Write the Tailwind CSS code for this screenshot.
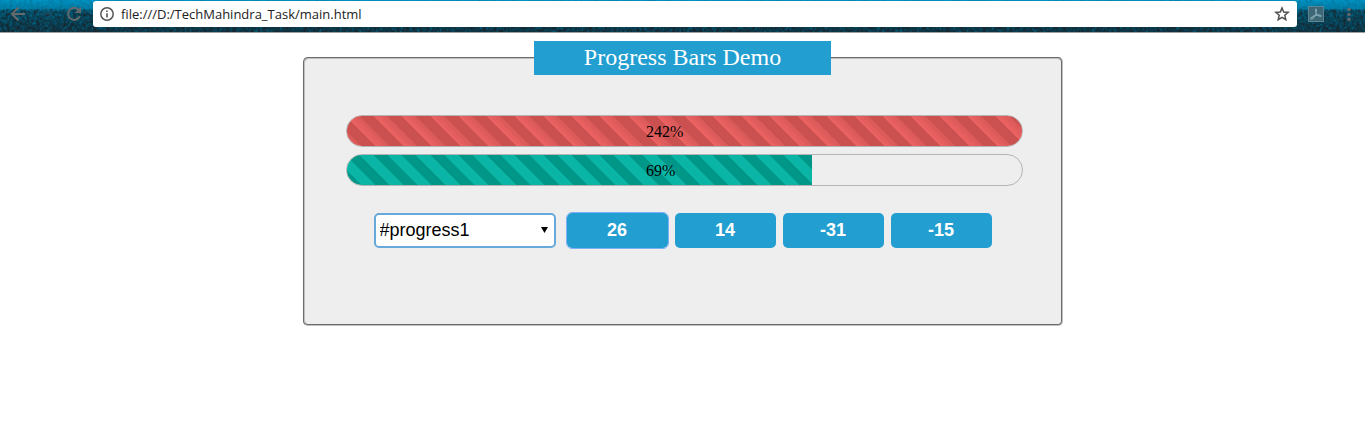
<!DOCTYPE html>
<html lang="en">
<head>
<meta charset="utf-8">
<title>Progress Bars Demo</title>
<script src="https://cdn.jsdelivr.net/npm/@tailwindcss/browser@4"></script>
</head>
<body class="min-h-screen bg-white font-['Liberation_Serif',serif] text-black">
<header class="relative flex h-[33px] items-start border-b border-[#a0a0a0] bg-[#063f54] pt-px">
  <svg class="absolute inset-0 h-full w-full" aria-hidden="true">
    <defs>
      <linearGradient id="glow" x1="0" y1="0" x2="0" y2="1">
        <stop offset="0" stop-color="#0095c6"/>
        <stop offset=".27" stop-color="#007da6"/>
        <stop offset=".36" stop-color="#02506a"/>
        <stop offset=".65" stop-color="#064358"/>
        <stop offset="1" stop-color="#0c3343"/>
      </linearGradient>
      <filter id="grain" x="0" y="0" width="100%" height="100%" color-interpolation-filters="sRGB">
        <feTurbulence type="fractalNoise" baseFrequency=".3" numOctaves="3" seed="4"/>
        <feColorMatrix values="0 0 0 0 .1  0 0 0 0 .12  0 0 0 0 .14  2 0 0 0 -.8"/>
      </filter>
      <filter id="sparkle" x="0" y="0" width="100%" height="100%" color-interpolation-filters="sRGB">
        <feTurbulence type="fractalNoise" baseFrequency=".4" numOctaves="2" seed="9"/>
        <feColorMatrix values="0 0 0 0 0  0 0 0 0 .5  0 0 0 0 .68  1.6 0 0 0 -.75"/>
      </filter>
    </defs>
    <rect width="100%" height="32" fill="url(#glow)"/>
    <rect width="100%" height="32" filter="url(#sparkle)"/>
    <rect y="9" width="100%" height="23" filter="url(#grain)"/>
    <rect width="100%" height="9" filter="url(#grain)" opacity=".2"/>
  </svg>
  <nav class="relative flex h-[26px] w-[93px] shrink-0 items-center text-[#63696c]" aria-label="History">
    <button type="button" aria-label="Back" class="ml-[10px] h-4 w-4">
      <svg viewBox="0 0 16 16" class="h-4 w-4" fill="none" stroke="currentColor" stroke-width="2"><path d="M15 8H2.500M8.500 1.500L2 8l6.500 6.500"/></svg>
    </button>
    <button type="button" aria-label="Forward" class="ml-[12px] h-4 w-4 text-[#24586b]/40">
      <svg viewBox="0 0 16 16" class="h-4 w-4" fill="none" stroke="currentColor" stroke-width="2"><path d="M2 8h11M8 2.500L13.500 8L8 13.500"/></svg>
    </button>
    <button type="button" aria-label="Reload" class="ml-[12px] h-4 w-4">
      <svg viewBox="0 0 16 16" class="h-4 w-4" fill="none" stroke="currentColor" stroke-width="2"><path d="M12.800 4A6 6 0 1 0 13.800 10"/><path d="M15 .8V7H8.800z" fill="currentColor" stroke="none"/></svg>
    </button>
  </nav>
  <form class="relative flex h-[26px] min-w-0 flex-1 items-center rounded-[3px] bg-white px-[7px]">
    <svg viewBox="0 0 14 14" class="h-[14px] w-[14px] shrink-0" fill="none" stroke="#555" aria-hidden="true"><circle cx="7" cy="7" r="6.200" stroke-width="1.500"/><path d="M7 6.200v4.200M7 3.400v1.600" stroke-width="1.600"/></svg>
    <input type="text" aria-label="Address" value="file:///D:/TechMahindra_Task/main.html" class="ml-[7px] min-w-0 flex-1 bg-transparent font-['Open_Sans',sans-serif] text-[13px] leading-[20px] text-[#222] outline-none">
    <button type="button" aria-label="Bookmark this page" class="h-4 w-4 shrink-0">
      <svg viewBox="0 0 16 16" class="h-4 w-4" fill="none" stroke="#505050" stroke-width="1.500"><path d="M8 2l1.700 4 4.500.4-3.400 2.900 1 4.300L8 11.300l-3.800 2.300 1-4.300L1.800 6.400 6.300 6z"/></svg>
    </button>
  </form>
  <div class="relative flex h-[26px] w-[68px] shrink-0 items-center">
    <button type="button" aria-label="PDF tools" class="ml-[11px] h-4 w-4 border border-[#5a8797] bg-[#3d6775]">
      <svg viewBox="0 0 14 14" class="h-[14px] w-[14px]" fill="none" stroke="#7ea3b0" stroke-width="1.100"><path d="M2 12c-1.300-1 2.500-3.200 5-3.600 2.400-.5 5.300-.4 5.200.6-.1 1.100-2.600.3-4.200-1.600C6.500 5.500 5.900 2 6.900 2c1.100 0 .8 3-.6 6C4.900 10.800 2.900 12.900 2 12z"/></svg>
    </button>
    <button type="button" aria-label="Menu" class="ml-[17px] h-4 w-4">
      <svg viewBox="0 0 16 16" class="h-4 w-4" fill="#63696c"><circle cx="8" cy="3.500" r="1.700"/><circle cx="8" cy="8.500" r="1.700"/><circle cx="8" cy="13.500" r="1.700"/></svg>
    </button>
  </div>
</header>

<main class="px-2 pt-2">
  <fieldset class="mx-auto max-w-[760px] rounded-[5px] border-2 border-[#c0c0c0] bg-[#eee] pb-[76px] [border-style:groove]">
    <legend class="mx-auto bg-[#229ed0] px-[50px] pt-[2px] pb-1 text-center text-2xl leading-[28px] text-white">Progress Bars Demo</legend>
    <div class="flex flex-col gap-[7px] pt-10 pr-[38px] pl-[41px]">
      <div role="progressbar" aria-label="progress1" aria-valuenow="242" class="grid h-8 items-center overflow-hidden rounded-full border border-[#b4b4b4]">
        <div class="col-start-1 row-start-1 h-full bg-[repeating-linear-gradient(45deg,#ed6363_0px,#d85858_10px,#ca5150_10px,#ca5150_20px)]" style="width:100%"></div>
        <span class="col-start-1 row-start-1 ml-[calc(50%-38px)] pt-[2px] leading-5">242%</span>
      </div>
      <div role="progressbar" aria-label="progress2" aria-valuenow="69" class="grid h-8 items-center overflow-hidden rounded-full border border-[#b4b4b4]">
        <div class="col-start-1 row-start-1 h-full bg-[repeating-linear-gradient(45deg,#009688_0px,#009688_10px,#0ab5a6_10px,#0ab5a6_20px)]" style="width:69%"></div>
        <span class="col-start-1 row-start-1 ml-[calc(50%-38px)] pt-[2px] leading-5">69%</span>
      </div>
    </div>
    <div class="mt-[27px] flex justify-center font-['Liberation_Sans',sans-serif] text-lg">
      <div class="relative mr-[11px] w-[182px]">
        <select aria-label="Progress bar" class="h-[35px] w-full appearance-none rounded-[5px] border-2 border-[#67a9da] bg-white pb-[2px] pl-1 text-black outline-none">
          <option>#progress1</option>
          <option>#progress2</option>
        </select>
        <svg viewBox="0 0 7 6" class="pointer-events-none absolute top-[14px] right-2 h-[6px] w-[7px]" aria-hidden="true"><path d="M0 0h7L3.500 6z"/></svg>
      </div>
      <div class="flex gap-[7px] text-white">
        <button type="button" class="h-[35px] w-[101px] rounded-[5px] bg-[#229ed0] pb-[2px] font-bold outline-1 outline-[#7fb0f5]">26</button>
        <button type="button" class="h-[35px] w-[101px] rounded-[5px] bg-[#229ed0] pb-[2px] font-bold">14</button>
        <button type="button" class="h-[35px] w-[101px] rounded-[5px] bg-[#229ed0] pb-[2px] font-bold">-31</button>
        <button type="button" class="h-[35px] w-[101px] rounded-[5px] bg-[#229ed0] pb-[2px] font-bold">-15</button>
      </div>
    </div>
  </fieldset>
</main>
</body>
</html>
